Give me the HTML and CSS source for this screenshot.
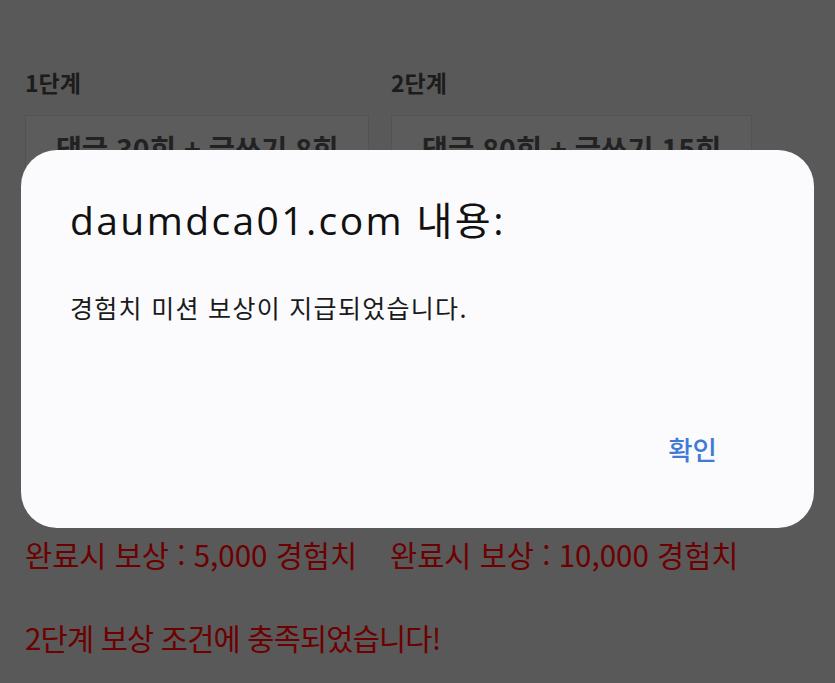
FILE: index.html
```html
<!DOCTYPE html>
<html lang="ko">
<head>
<meta charset="utf-8">
<title>경험치 미션</title>
<link rel="stylesheet" href="styles.css">
</head>
<body>
<div class="page">
  <div class="stages">
    <div class="stage stage-1">
      <div class="label">1단계</div>
      <div class="box"><p class="cond">댓글 30회 + 글쓰기 8회</p></div>
      <p class="reward">완료시 보상 : 5,000 경험치</p>
    </div>
    <div class="stage stage-2">
      <div class="label">2단계</div>
      <div class="box"><p class="cond">댓글 80회 + 글쓰기 15회</p></div>
      <p class="reward">완료시 보상 : 10,000 경험치</p>
    </div>
  </div>
  <p class="notice">2단계 보상 조건에 충족되었습니다!</p>
</div>

<div class="dialog" role="alertdialog">
  <h1 class="dialog-title">daumdca01.com 내용:</h1>
  <p class="dialog-msg">경험치 미션 보상이 지급되었습니다.</p>
  <div class="dialog-actions"><button class="dialog-btn">확인</button></div>
</div>
</body>
</html>
```
FILE: styles.css
```css
html, body {
  margin: 0;
  padding: 0;
  background: #595959;
  width: 835px;
  height: 683px;
  overflow: hidden;
}
body {
  font-family: "Noto Sans CJK KR", "Noto Sans", sans-serif;
  position: relative;
}
.page {
  padding: 66px 0 0 25px;
}
.stages {
  display: grid;
  grid-template-columns: 344px 361px;
  column-gap: 22px;
}
.label {
  font-size: 23px;
  font-weight: 700;
  color: #1c1c1c;
  line-height: 32px;
}
.box {
  margin-top: 17px;
  height: 395px;
  background: #5c5c5c;
  border: 1px solid #535353;
}
.cond {
  margin: 13px 0 0;
  text-align: center;
  font-size: 28.5px;
  font-weight: 700;
  color: #222;
  line-height: 38px;
}
.reward {
  margin: 22px 0 0;
  font-size: 29.5px;
  line-height: 40px;
  color: #6d0000;
  white-space: nowrap;
}
.stage-2 .reward {
  margin-left: -1px;
}
.notice {
  margin: 43px 0 0;
  font-size: 29.5px;
  line-height: 40px;
  color: #6d0000;
  letter-spacing: -0.8px;
}
.dialog {
  position: absolute;
  left: 21px;
  top: 150px;
  width: 793px;
  height: 378px;
  box-sizing: border-box;
  background: #fbfbfd;
  border-radius: 36px;
  padding: 44px 49px 0 49px;
  display: flex;
  flex-direction: column;
}
.dialog-title {
  margin: 0;
  font-family: "Open Sans", "Noto Sans CJK KR", sans-serif;
  font-weight: 400;
  font-size: 39px;
  line-height: 52px;
  color: #111;
  letter-spacing: 2.4px;
}
.dialog-msg {
  margin: 44px 0 0;
  font-size: 25px;
  line-height: 34px;
  color: #1a1a1a;
  letter-spacing: 1.3px;
}
.dialog-actions {
  margin-top: auto;
  margin-bottom: 62px;
  display: flex;
  justify-content: flex-end;
}
.dialog-btn {
  border: 0;
  background: none;
  padding: 0;
  margin-right: 48px;
  font-family: "Noto Sans CJK KR", sans-serif;
  font-size: 26.5px;
  font-weight: 500;
  line-height: 34px;
  color: #3f7ad6;
}
```
